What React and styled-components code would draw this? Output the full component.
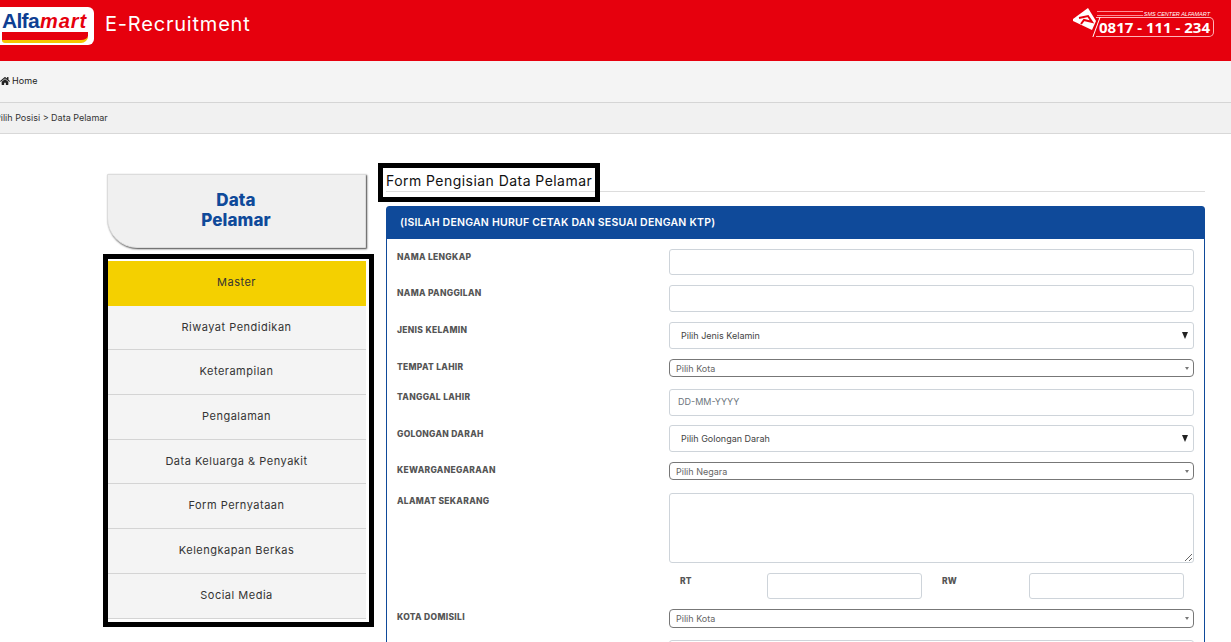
import styled, { createGlobalStyle } from 'styled-components';
import { FaHome } from 'react-icons/fa';

const menuItems = [
    'Master',
    'Riwayat Pendidikan',
    'Keterampilan',
    'Pengalaman',
    'Data Keluarga & Penyakit',
    'Form Pernyataan',
    'Kelengkapan Berkas',
    'Social Media',
];

function Logo() {
    return (
        <LogoBox>
            <LogoText>
                <LogoAlfa>Alfa</LogoAlfa>
                <LogoMart>mart</LogoMart>
            </LogoText>
            <LogoStripe />
        </LogoBox>
    );
}

function SmsCenter() {
    return (
        <Sms>
            <EnvelopeIcon width="26" height="26" viewBox="0 0 26 26">
                <path d="M1 12 L16 1 L24 14 L20 23 L1 14 Z" fill="#fff" />
                <path d="M7 11 L16 9 L20 15 L12 13 L9 17" fill="none" stroke="#e6000d" strokeWidth="2" />
            </EnvelopeIcon>
            <SmsBody>
                <SmsCaption>
                    <SmsLines />
                    <SmsLabel>SMS CENTER ALFAMART</SmsLabel>
                </SmsCaption>
                <SmsNumber>0817 - 111 - 234</SmsNumber>
            </SmsBody>
        </Sms>
    );
}

function App() {
    return (
        <Page>
            <GlobalStyle />
            <Header>
                <Brand>
                    <Logo />
                    <BrandTitle>E-Recruitment</BrandTitle>
                </Brand>
                <SmsCenter />
            </Header>
            <NavBar>
                <FaHome size={10} color="#222" />
                <NavLink>Home</NavLink>
            </NavBar>
            <Breadcrumb>Pilih Posisi &gt; Data Pelamar</Breadcrumb>
            <Content>
                <Sidebar>
                    <SidebarTitle>Data<br />Pelamar</SidebarTitle>
                    <Menu>
                        {menuItems.map((item, i) => (
                            <MenuItem key={item} $active={i === 0}>{item}</MenuItem>
                        ))}
                    </Menu>
                </Sidebar>
                <Main>
                    <FormTitle>
                        <FormTitleText>Form Pengisian Data Pelamar</FormTitleText>
                    </FormTitle>
                    <Panel>
                        <PanelHead>(ISILAH DENGAN HURUF CETAK DAN SESUAI DENGAN KTP)</PanelHead>
                        <PanelBody>
                            <Row $gap={10}>
                                <Label>NAMA LENGKAP</Label>
                                <Input $h={26} />
                            </Row>
                            <Row $gap={10}>
                                <Label>NAMA PANGGILAN</Label>
                                <Input />
                            </Row>
                            <Row $gap={10}>
                                <Label>JENIS KELAMIN</Label>
                                <SelectBox>
                                    <Select defaultValue="">
                                        <option value="">Pilih Jenis Kelamin</option>
                                    </Select>
                                </SelectBox>
                            </Row>
                            <Row $gap={12}>
                                <Label>TEMPAT LAHIR</Label>
                                <SearchSelect>Pilih Kota<Caret /></SearchSelect>
                            </Row>
                            <Row $gap={9}>
                                <Label>TANGGAL LAHIR</Label>
                                <Input placeholder="DD-MM-YYYY" />
                            </Row>
                            <Row $gap={10}>
                                <Label $low>GOLONGAN DARAH</Label>
                                <SelectBox>
                                    <Select defaultValue="">
                                        <option value="">Pilih Golongan Darah</option>
                                    </Select>
                                </SelectBox>
                            </Row>
                            <Row $gap={13}>
                                <Label>KEWARGANEGARAAN</Label>
                                <SearchSelect>Pilih Negara<Caret /></SearchSelect>
                            </Row>
                            <Row $gap={10}>
                                <Label>ALAMAT SEKARANG</Label>
                                <TextArea />
                            </Row>
                            <Row $gap={10}>
                                <span />
                                <SubRow>
                                    <SubLabel $indent={11}>RT</SubLabel>
                                    <SubInput />
                                    <SubLabel $indent={20}>RW</SubLabel>
                                    <SubInput />
                                </SubRow>
                            </Row>
                            <Row $gap={12}>
                                <Label>KOTA DOMISILI</Label>
                                <SearchSelect $h={19}>Pilih Kota<Caret /></SearchSelect>
                            </Row>
                            <Row $gap={10}>
                                <span />
                                <Input />
                            </Row>
                        </PanelBody>
                    </Panel>
                </Main>
            </Content>
        </Page>
    );
}

export default App;

const GlobalStyle = createGlobalStyle`
    html, body {
        margin: 0;
        height: 642px;
        overflow: hidden;
        background: #fff;
        font-family: Inter, "Open Sans", sans-serif;
    }
    *, *::before, *::after {
        box-sizing: border-box;
    }
`;

const Page = styled.div`
    width: 1231px;
    height: 642px;
    overflow: hidden;
`;

const Header = styled.header`
    display: flex;
    justify-content: space-between;
    align-items: flex-start;
    height: 61px;
    background: #e6000d;
`;

const Brand = styled.div`
    display: flex;
    align-items: center;
    padding-top: 7px;
`;

const LogoBox = styled.div`
    width: 94px;
    height: 38px;
    padding: 4px 0 0 2px;
    background: #fff;
    border-radius: 0 6px 6px 0;
    overflow: hidden;
`;

const LogoText = styled.div`
    display: flex;
    align-items: baseline;
    height: 20px;
    font-family: "Liberation Sans", sans-serif;
    line-height: 20px;
    font-weight: 700;
`;

const LogoAlfa = styled.span`
    color: #0f3f93;
    font-size: 21px;
    letter-spacing: -0.7px;
`;

const LogoMart = styled.span`
    margin-left: 1px;
    color: #e6000d;
    font-size: 20px;
    font-style: italic;
    letter-spacing: 1px;
`;

const LogoStripe = styled.div`
    width: 86px;
    height: 11px;
    margin-top: 1px;
    background: #e6000d;
    border-bottom: 3px solid #f5c400;
    border-radius: 0 0 7px 3px;
`;

const BrandTitle = styled.div`
    margin-left: 11px;
    padding-bottom: 5px;
    color: #fff;
    font-size: 20px;
    letter-spacing: 0.8px;
    white-space: nowrap;
`;

const Sms = styled.div`
    display: flex;
    align-items: flex-start;
    margin: 7px 17px 0 0;
`;

const EnvelopeIcon = styled.svg`
    flex: none;
`;

const SmsBody = styled.div`
    width: 118px;
    margin-left: -2px;
    padding-top: 3px;
`;

const SmsCaption = styled.div`
    display: flex;
    align-items: center;
    justify-content: flex-end;
    gap: 1px;
    height: 7px;
`;

const SmsLines = styled.div`
    width: 46px;
    height: 5px;
    border-top: 1px solid #ff8d95;
    border-bottom: 1px solid #ff8d95;
`;

const SmsLabel = styled.span`
    padding-right: 4px;
    color: #fff;
    font-family: "Liberation Sans", sans-serif;
    font-size: 5.5px;
    font-style: italic;
    white-space: nowrap;
`;

const SmsNumber = styled.div`
    position: relative;
    height: 20px;
    border: 1px solid #ffb3b8;
    border-left: none;
    border-radius: 0 5px 5px 0;
    color: #fff;
    font-family: "Open Sans", sans-serif;
    font-size: 15px;
    font-weight: 700;
    line-height: 18px;
    text-align: center;
    white-space: nowrap;

    &::before {
        content: '';
        position: absolute;
        left: 0;
        top: -1px;
        bottom: -1px;
        width: 1px;
        background: #fff;
        transform: skewX(-20deg);
    }
`;

const NavBar = styled.nav`
    display: flex;
    align-items: center;
    gap: 2px;
    height: 42px;
    padding-bottom: 2px;
    background: #f4f4f4;
    border-bottom: 1px solid #d5d5d5;
    font-size: 9px;
    color: #222;
`;

const NavLink = styled.span`
    letter-spacing: 0.1px;
`;

const Breadcrumb = styled.div`
    height: 31px;
    margin-left: -5px;
    padding-top: 9px;
    background: #f1f1f1;
    border-bottom: 1px solid #d8d8d8;
    color: #333;
    font-size: 9px;
    line-height: 11px;
`;

const Content = styled.div`
    display: flex;
    align-items: flex-start;
    padding: 29px 0 0 103px;
`;

const Sidebar = styled.aside`
    flex: none;
    width: 271px;
    margin-top: 11px;
`;

const SidebarTitle = styled.div`
    width: 259px;
    height: 74px;
    margin: 0 0 6px 4px;
    padding: 15px 1px 0 0;
    background: #f0f0f0;
    border: 1px solid #dcdcdc;
    border-radius: 0 0 0 30px;
    box-shadow: 1px 1px 2px #444;
    color: #0f4a9a;
    font-size: 17px;
    font-weight: 800;
    line-height: 20px;
    letter-spacing: 0.1px;
    text-align: center;
`;

const Menu = styled.div`
    height: 373px;
    padding: 2px 3px 0 0;
    border: 5px solid #000;
    background: #fff;
`;

const MenuItem = styled.div`
    display: flex;
    align-items: center;
    justify-content: center;
    height: 44.7px;
    padding: 0 1px 2px 0;
    background: ${(p) => (p.$active ? '#f4d000' : '#f4f4f4')};
    border-bottom: 1px solid ${(p) => (p.$active ? '#f4d000' : '#d4d4d4')};
    color: #333;
    font-size: 11px;
    letter-spacing: 0.5px;
`;

const Main = styled.main`
    flex: none;
    width: 827px;
    margin-left: 4px;
`;

const FormTitle = styled.div`
    position: relative;
    height: 29px;
    margin: 0 0 14px 8px;
    padding-top: 7px;
    border-bottom: 1px solid #ddd;
`;

const FormTitleText = styled.h2`
    display: inline-block;
    margin: 0;
    color: #111;
    font-size: 14px;
    font-weight: 400;
    line-height: 22px;
    letter-spacing: 0.45px;
    white-space: nowrap;

    &::before {
        content: '';
        position: absolute;
        left: -8px;
        top: 0;
        width: 222px;
        height: 39px;
        border: 5px solid #000;
        pointer-events: none;
    }
`;

const Panel = styled.section`
    width: 819px;
    margin-left: 8px;
    border: 1px solid #0f4a9a;
    border-radius: 3px 3px 0 0;
`;

const PanelHead = styled.div`
    height: 32px;
    padding-left: 13px;
    background: #0f4a9a;
    color: #fff;
    font-size: 10.5px;
    font-weight: 600;
    line-height: 32px;
    letter-spacing: 0.23px;
    white-space: nowrap;
`;

const PanelBody = styled.div`
    padding: 10px 10px 0;
`;

const Row = styled.div`
    display: grid;
    grid-template-columns: 272px 525px;
    margin-bottom: ${(p) => p.$gap}px;
`;

const Label = styled.label`
    padding-top: ${(p) => (p.$low ? 4 : 3)}px;
    color: #555;
    font-size: 8.5px;
    font-weight: 800;
    line-height: 10px;
    letter-spacing: 0.3px;
    white-space: nowrap;
`;

const Input = styled.input`
    display: block;
    width: 100%;
    height: ${(p) => p.$h || 27}px;
    padding: 0 8px 2px;
    background: #fff;
    border: 1px solid #ced4da;
    border-radius: 3px;
    font-family: inherit;
    font-size: 9px;
    outline: none;

    &::placeholder {
        color: #6c757d;
        opacity: 1;
    }
`;

const SelectBox = styled.div`
    position: relative;

    &::after {
        content: '';
        position: absolute;
        right: 6px;
        top: 10px;
        border-top: 7px solid #222;
        border-left: 3.5px solid transparent;
        border-right: 3.5px solid transparent;
        pointer-events: none;
    }
`;

const Select = styled.select`
    display: block;
    width: 100%;
    height: 27px;
    padding: 0 11px 1px;
    appearance: none;
    background: #fff;
    border: 1px solid #ced4da;
    border-radius: 3px;
    color: #444;
    font-family: inherit;
    font-size: 9px;
    outline: none;
`;

const SearchSelect = styled.div`
    position: relative;
    height: ${(p) => p.$h || 18}px;
    padding-left: 6px;
    border: 1px solid #777;
    border-radius: 4px;
    color: #666;
    font-size: 9px;
    line-height: 17px;
`;

const Caret = styled.span`
    position: absolute;
    right: 4px;
    top: 7px;
    border-top: 3px solid #777;
    border-left: 2px solid transparent;
    border-right: 2px solid transparent;
`;

const TextArea = styled.textarea`
    display: block;
    width: 100%;
    height: 70px;
    background: #fff;
    border: 1px solid #ced4da;
    border-radius: 3px;
    outline: none;
`;

const SubRow = styled.div`
    display: grid;
    grid-template-columns: 98px 155px 107px 155px;
`;

const SubLabel = styled.span`
    padding: 3px 0 0 ${(p) => p.$indent}px;
    color: #555;
    font-size: 8.5px;
    font-weight: 800;
    line-height: 10px;
`;

const SubInput = styled(Input)`
    height: 26px;
`;
